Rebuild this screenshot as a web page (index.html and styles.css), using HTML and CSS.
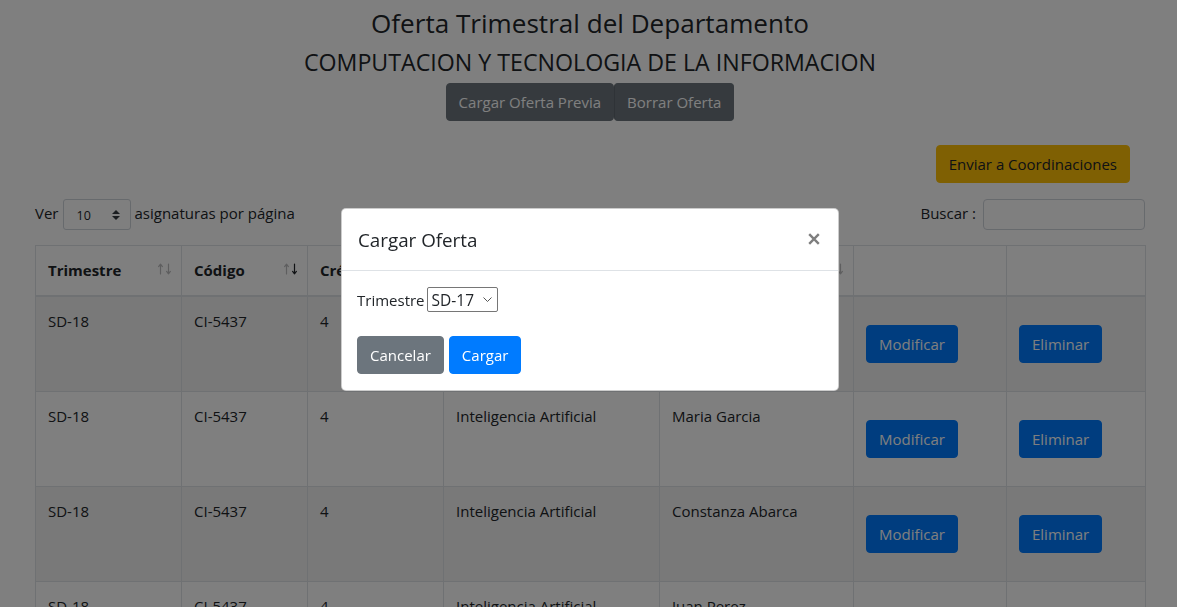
FILE: index.html
```html
<!DOCTYPE html>
<html lang="es">
<head>
<meta charset="utf-8">
<title>Oferta Trimestral del Departamento</title>
<link rel="stylesheet" href="styles.css">
</head>
<body>
<div class="page">
  <header class="page-head">
    <h3 class="title">Oferta Trimestral del Departamento</h3>
    <h4 class="subtitle">COMPUTACION Y TECNOLOGIA DE LA INFORMACION</h4>
    <div class="btn-group">
      <button class="btn btn-secondary">Cargar Oferta Previa</button><button class="btn btn-secondary">Borrar Oferta</button>
    </div>
  </header>

  <div class="send-row">
    <button class="btn btn-warning">Enviar a Coordinaciones</button>
  </div>

  <div class="controls">
    <div class="length">
      <span class="lbl">Ver</span>
      <div class="small-select"><span class="small-select-value">10</span>
        <svg class="updown" width="8" height="10" viewBox="0 0 4 5"><path d="M2 0L0 2h4zm0 5L0 3h4z" fill="#343a40"/></svg>
      </div>
      <span class="lbl">asignaturas por página</span>
    </div>
    <div class="search">
      <label class="lbl" for="buscar">Buscar :</label>
      <input id="buscar" class="search-input" type="text">
    </div>
  </div>

  <table class="offer-table">
    <colgroup>
      <col class="c1"><col class="c2"><col class="c3"><col class="c4"><col class="c5"><col class="c6"><col class="c7">
    </colgroup>
    <thead>
      <tr>
        <th>Trimestre<span class="sort"><svg width="14" height="12" viewBox="0 0 14 12"><g fill="none" stroke-width="1.2" stroke-linecap="round" stroke-linejoin="round"><g class="dim"><path d="M2.5 1.5V11M0.6 3.6L2.5 1.2L4.4 3.6"/></g><g class="dim"><path d="M10.5 1V10.5M8.6 8.4L10.5 10.8L12.4 8.4"/></g></g></svg></span></th>
        <th>Código<span class="sort"><svg width="14" height="12" viewBox="0 0 14 12"><g fill="none" stroke-width="1.2" stroke-linecap="round" stroke-linejoin="round"><g class="dim"><path d="M2.5 1.5V11M0.6 3.6L2.5 1.2L4.4 3.6"/></g><g class="on"><path d="M10.5 1V10.5M8.6 8.4L10.5 10.8L12.4 8.4"/></g></g></svg></span></th>
        <th>Créditos<span class="sort"><svg width="14" height="12" viewBox="0 0 14 12"><g fill="none" stroke-width="1.2" stroke-linecap="round" stroke-linejoin="round"><g class="dim"><path d="M2.5 1.5V11M0.6 3.6L2.5 1.2L4.4 3.6"/></g><g class="dim"><path d="M10.5 1V10.5M8.6 8.4L10.5 10.8L12.4 8.4"/></g></g></svg></span></th>
        <th>Asignatura<span class="sort"><svg width="14" height="12" viewBox="0 0 14 12"><g fill="none" stroke-width="1.2" stroke-linecap="round" stroke-linejoin="round"><g class="dim"><path d="M2.5 1.5V11M0.6 3.6L2.5 1.2L4.4 3.6"/></g><g class="dim"><path d="M10.5 1V10.5M8.6 8.4L10.5 10.8L12.4 8.4"/></g></g></svg></span></th>
        <th>Profesor<span class="sort"><svg width="14" height="12" viewBox="0 0 14 12"><g fill="none" stroke-width="1.2" stroke-linecap="round" stroke-linejoin="round"><g class="dim"><path d="M2.5 1.5V11M0.6 3.6L2.5 1.2L4.4 3.6"/></g><g class="dim"><path d="M10.5 1V10.5M8.6 8.4L10.5 10.8L12.4 8.4"/></g></g></svg></span></th>
        <th></th>
        <th></th>
      </tr>
    </thead>
    <tbody>
      <tr>
        <td>SD-18</td><td>CI-5437</td><td>4</td><td>Inteligencia Artificial</td><td>Pedro Gomez</td>
        <td class="action"><div class="action-wrap"><button class="btn btn-primary">Modificar</button></div></td>
        <td class="action"><div class="action-wrap"><button class="btn btn-primary">Eliminar</button></div></td>
      </tr>
      <tr>
        <td>SD-18</td><td>CI-5437</td><td>4</td><td>Inteligencia Artificial</td><td>Maria Garcia</td>
        <td class="action"><div class="action-wrap"><button class="btn btn-primary">Modificar</button></div></td>
        <td class="action"><div class="action-wrap"><button class="btn btn-primary">Eliminar</button></div></td>
      </tr>
      <tr>
        <td>SD-18</td><td>CI-5437</td><td>4</td><td>Inteligencia Artificial</td><td>Constanza Abarca</td>
        <td class="action"><div class="action-wrap"><button class="btn btn-primary">Modificar</button></div></td>
        <td class="action"><div class="action-wrap"><button class="btn btn-primary">Eliminar</button></div></td>
      </tr>
      <tr>
        <td>SD-18</td><td>CI-5437</td><td>4</td><td>Inteligencia Artificial</td><td>Juan Perez</td>
        <td class="action"><div class="action-wrap"><button class="btn btn-primary">Modificar</button></div></td>
        <td class="action"><div class="action-wrap"><button class="btn btn-primary">Eliminar</button></div></td>
      </tr>
    </tbody>
  </table>
</div>

<div class="backdrop"></div>

<div class="modal" role="dialog">
  <div class="modal-header">
    <h5 class="modal-title">Cargar Oferta</h5>
    <button class="close" aria-label="Cerrar">
      <svg width="12" height="12" viewBox="0 0 12 12"><path d="M1.2 1.2L10.8 10.8M10.8 1.2L1.2 10.8" stroke="#000" stroke-width="2.4" stroke-linecap="butt"/></svg>
    </button>
  </div>
  <div class="modal-body">
    <div class="field">
      <label>Trimestre</label>
      <div class="native-select"><span>SD-17</span>
        <svg width="9" height="5" viewBox="0 0 9 5"><path d="M0.5 0.5L4.5 4.5L8.5 0.5" fill="none" stroke="#555" stroke-width="1"/></svg>
      </div>
    </div>
    <div class="modal-actions">
      <button class="btn btn-secondary">Cancelar</button>
      <button class="btn btn-primary">Cargar</button>
    </div>
  </div>
</div>
</body>
</html>
```

FILE: styles.css
```css
html, body {
  margin: 0;
  padding: 0;
}
body {
  font-family: "Open Sans", "Noto Sans", sans-serif;
  font-size: 15px;
  line-height: 24px;
  color: #212529;
  background: #fff;
  overflow: hidden;
}
button, input {
  font-family: inherit;
}

.page {
  width: 1110px;
  margin-left: 35px;
}

/* header */
.page-head {
  padding-top: 6px;
  text-align: center;
}
.title {
  margin: 0 0 8px;
  font-size: 26.1px;
  line-height: 34px;
  font-weight: 400;
}
.subtitle {
  margin: 0 0 6px;
  font-size: 23.2px;
  line-height: 29px;
  font-weight: 400;
}
.btn-group {
  display: inline-flex;
}

/* buttons */
.btn {
  display: inline-block;
  border: 1px solid transparent;
  border-radius: 4px;
  padding: 6px 12px;
  font-size: 15px;
  line-height: 24px;
  font-weight: 400;
  cursor: pointer;
}
.btn-secondary {
  background: #6c757d;
  border-color: #6c757d;
  color: #fff;
}
.btn-group .btn + .btn {
  border-left-color: #5f676e;
}
.btn-primary {
  background: #007bff;
  border-color: #007bff;
  color: #fff;
}
.btn-warning {
  background: #ffc107;
  border-color: #ffc107;
  color: #212529;
}

.send-row {
  display: flex;
  justify-content: flex-end;
  margin-top: 24px;
  padding-right: 15px;
}

/* controls */
.controls {
  display: flex;
  justify-content: space-between;
  align-items: center;
  margin-top: 16px;
}
.length, .search {
  display: flex;
  align-items: center;
}
.lbl {
  padding-bottom: 3px;
}
.small-select {
  box-sizing: border-box;
  width: 68px;
  height: 31px;
  margin: 0 4px;
  border: 1px solid #ced4da;
  border-radius: 3px;
  display: flex;
  align-items: center;
  justify-content: space-between;
  padding: 0 10px 0 13px;
}
.small-select-value {
  font-size: 12.5px;
  line-height: 1;
  padding-top: 3px;
}
.search label {
  margin-right: 7px;
}
.search-input {
  box-sizing: border-box;
  width: 162px;
  height: 31px;
  border: 1px solid #ced4da;
  border-radius: 4px;
  padding: 4px 8px;
  font-size: 14px;
  background: #fff;
}

/* table */
.offer-table {
  margin-top: 15px;
  width: 1110px;
  table-layout: fixed;
  border-collapse: collapse;
}
.c1 { width: 146px; }
.c2 { width: 126px; }
.c3 { width: 136px; }
.c4 { width: 216px; }
.c5 { width: 194px; }
.c6 { width: 153px; }
.c7 { width: 139px; }
.offer-table th,
.offer-table td {
  border: 1px solid #dee2e6;
  padding: 12px;
  text-align: left;
  vertical-align: top;
  white-space: nowrap;
  overflow: hidden;
}
.offer-table thead th {
  border-bottom-width: 2px;
  padding-bottom: 13px;
  font-weight: 700;
  position: relative;
}
.sort {
  position: absolute;
  right: 9px;
  top: 17px;
  line-height: 0;
}
.sort .dim { stroke: rgba(33, 37, 41, 0.3); }
.sort .on { stroke: #212529; }
.offer-table tbody tr:nth-child(odd) {
  background: rgba(0, 0, 0, 0.05);
}
.offer-table td.action {
  vertical-align: top;
}
.action-wrap {
  display: flex;
  padding: 16px 0;
}

/* modal */
.backdrop {
  position: fixed;
  inset: 0;
  background: rgba(0, 0, 0, 0.5);
}
.modal {
  position: fixed;
  top: 208px;
  left: 341px;
  width: 498px;
  box-sizing: border-box;
  background: #fff;
  border: 1px solid rgba(0, 0, 0, 0.2);
  border-radius: 5px;
}
.modal-header {
  display: flex;
  align-items: center;
  justify-content: space-between;
  padding: 16px 16px 15px;
  border-bottom: 1px solid #dee2e6;
}
.modal-title {
  margin: 0;
  font-size: 18.8px;
  line-height: 30px;
  font-weight: 400;
}
.close {
  background: none;
  border: 0;
  padding: 0;
  margin-right: 2px;
  margin-top: -3px;
  opacity: 0.5;
  line-height: 0;
  cursor: pointer;
}
.modal-body {
  padding: 16px 16px 16px 15px;
}
.field {
  display: flex;
  align-items: center;
  height: 25px;
}
.field label {
  margin-right: 2px;
}
.native-select {
  box-sizing: border-box;
  height: 25px;
  width: 71px;
  border: 1px solid #767676;
  border-radius: 2px;
  display: flex;
  align-items: center;
  justify-content: space-between;
  padding: 0 5px 0 4px;
  font-size: 15.5px;
}
.modal-actions {
  display: flex;
  gap: 5px;
  margin-top: 24px;
}
```
